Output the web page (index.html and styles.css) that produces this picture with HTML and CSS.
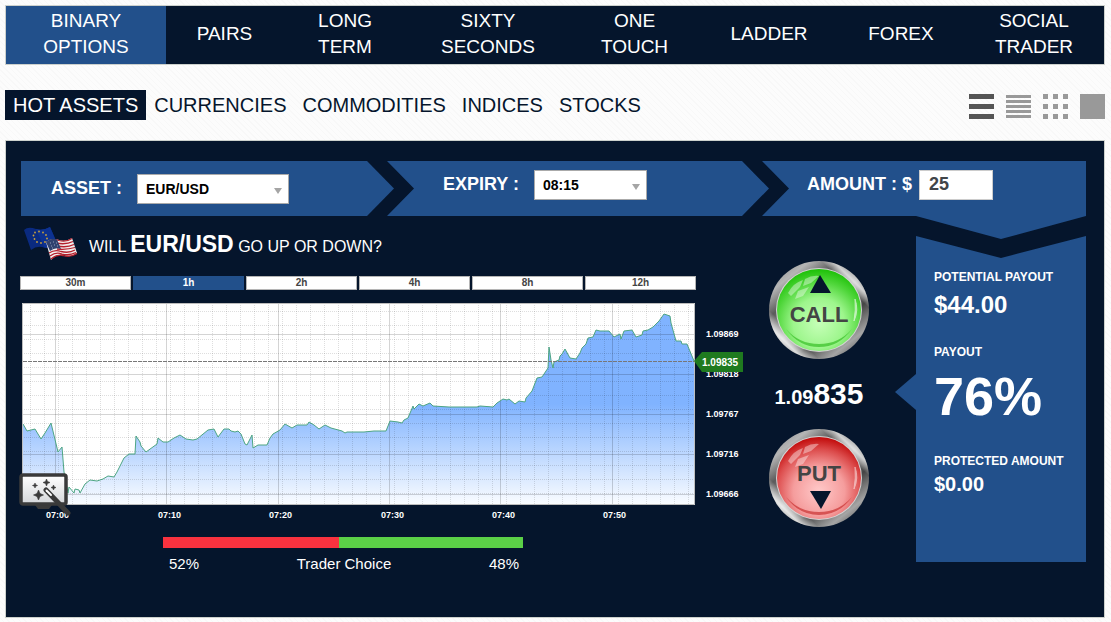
FILE: index.html
```html
<!DOCTYPE html>
<html lang="en">
<head>
<meta charset="utf-8">
<meta name="viewport" content="width=device-width, initial-scale=1">
<title>Binary Options</title>
<link rel="stylesheet" href="styles.css">
</head>
<body>
<nav class="main-nav" aria-label="Products">
  <a class="active" href="#binary">Binary<br>Options</a>
  <a href="#pairs">Pairs</a>
  <a href="#long">Long<br>Term</a>
  <a href="#sixty">Sixty<br>Seconds</a>
  <a href="#touch">One<br>Touch</a>
  <a href="#ladder">Ladder</a>
  <a href="#forex">Forex</a>
  <a href="#social">Social<br>Trader</a>
</nav>

<div class="toolbar">
  <nav class="asset-nav" aria-label="Assets">
    <a class="active" href="#hot">HOT ASSETS</a>
    <a href="#currencies">CURRENCIES</a>
    <a href="#commodities">COMMODITIES</a>
    <a href="#indices">INDICES</a>
    <a href="#stocks">STOCKS</a>
  </nav>
  <div class="views">
    <button class="current" type="button" aria-label="Wide rows"><svg width="25" height="25"><path d="M0 0h25v5H0zM0 10h25v5H0zM0 20h25v5H0z"/></svg></button>
    <button type="button" aria-label="Compact rows"><svg width="25" height="25"><path d="M0 1h25v3H0zM0 6h25v3H0zM0 11h25v3H0zM0 16h25v3H0zM0 21h25v3H0z"/></svg></button>
    <button type="button" aria-label="Grid"><svg width="25" height="25"><path d="M0 0h5v5H0zM10 0h5v5h-5zM20 0h5v5h-5zM0 10h5v5H0zM10 10h5v5h-5zM20 10h5v5h-5zM0 20h5v5H0zM10 20h5v5h-5zM20 20h5v5h-5z"/></svg></button>
    <button type="button" aria-label="Single"><svg width="25" height="25"><path d="M0 0h25v25H0z"/></svg></button>
  </div>
</div>

<main class="panel">
  <form class="steps">
    <div class="step step-asset">
      <label for="asset">ASSET :</label>
      <span class="select select-wide"><select id="asset"><option>EUR/USD</option></select></span>
    </div>
    <div class="step step-expiry">
      <label for="expiry">EXPIRY :</label>
      <span class="select"><select id="expiry"><option>08:15</option></select></span>
    </div>
    <div class="step step-amount">
      <label for="amount">AMOUNT : $</label>
      <input id="amount" type="text" value="25">
    </div>
  </form>

  <div class="trade">
    <section class="market">
      <h1 class="question">
        <svg class="flags" width="56" height="36" viewBox="0 0 56 36" aria-hidden="true">
          <path d="M1 4Q5 0 13 3Q20 5 27 1L34 17Q27 24 19 21Q13 20 8 24Z" fill="#0a2a80"/>
          <path d="M13 3Q20 5 27 1L34 17Q27 24 21 21Z" fill="#0d3291"/>
          <g fill="#c9a13c"><circle cx="16" cy="5.500" r=".9"/><circle cx="20" cy="6.500" r=".9"/><circle cx="23" cy="9" r=".9"/><circle cx="24" cy="12.500" r=".9"/><circle cx="22" cy="16" r=".9"/><circle cx="18" cy="17" r=".9"/><circle cx="14" cy="16" r=".9"/><circle cx="11.500" cy="13" r=".9"/><circle cx="10.500" cy="9.500" r=".9"/><circle cx="12" cy="6.500" r=".9"/></g>
          <path d="M23 16Q29 11 36 14Q43 16 49 12L54 27Q48 32 41 29Q33 28 28 34Z" fill="#f3eeee"/>
          <g fill="none" stroke="#b51f2c" stroke-width="1.300">
            <path d="M24 16.500Q30 12 36 14.500Q43 16.500 49 12.500M33 17Q43 19 50 15.500M34 20Q44 22 51 18.500M34 23Q44 24 52 21.500M26 27Q32 23 38 25.500Q46 27.500 52 24M27 30Q33 25.500 39 28Q46 30 53 26.500M28 33Q34 28 40 29.500Q47 32 54 27.500"/>
          </g>
          <path d="M23 16Q29 11 34 13.500L38 23Q32 21 27 25Z" fill="#31426f"/>
          <path d="M27 17h.8M30 16h.8M33 17h.8M28 20h.8M31 19h.8M34 20h.8M29 22h.8" stroke="#bcc5dc" stroke-width=".9"/>
        </svg>
        <span>WILL <strong>EUR/USD</strong> GO UP OR DOWN?</span>
      </h1>

      <div class="ranges">
        <button type="button">30m</button>
        <button class="active" type="button">1h</button>
        <button type="button">2h</button>
        <button type="button">4h</button>
        <button type="button">8h</button>
        <button type="button">12h</button>
      </div>

      <div class="chart">
        <svg class="plot" viewBox="0 0 724 222" role="img" aria-label="EUR/USD price, last hour">
          <defs>
            <linearGradient id="area" gradientUnits="userSpaceOnUse" x1="0" y1="0" x2="0" y2="202">
              <stop offset=".5" stop-color="#80b3ff"/>
              <stop offset="1" stop-color="#fbfdff"/>
            </linearGradient>
            <pattern id="minor" patternUnits="userSpaceOnUse" x="10" y="8" width="14" height="14">
              <path d="M.5 0V14M0 .5H14" stroke="#000" stroke-opacity=".13" stroke-dasharray="1 1"/>
            </pattern>
          </defs>
          <path d="M2 0H675V202H2Z" fill="#fff"/>
          <path fill="url(#area)" d="M3 202V121L7 128 15 126 21 136 25 130 31 120 38 149 42 144 44 169 48 190 49 184 54 190 55 186 59 187 60 190 65 181 70 177 77 178 83 176 88 173 94 174 97 169 104 155 109 151 115 151 116 133 120 139 121 143 126 149 137 141 138 135 143 139 148 139 154 135 160 132 166 136 173 137 177 136 188 127 194 126 198 134 204 126 209 126 211 128 215 129 218 128 221 131 225 141 227 142 232 132 233 145 238 142 247 142 250 135 253 131 260 127 265 121 272 125 277 122 287 122 289 119 294 122 299 126 305 122 311 125 322 128 325 130 327 129 344 129 354 128 366 128 370 118 378 119 382 120 384 117 388 115 393 103 394 106 399 101 403 103 410 100 413 103 429 104 457 104 460 103 473 104 477 100 483 96 487 97 489 96 495 101 499 98 505 99 506 95 512 88 517 75 522 74 528 65 529 44 531 57 533 65 534 59 539 57 540 53 542 51 545 46 550 55 556 56 560 50 562 45 566 41 568 35 573 34 576 27 580 28 589 28 594 34 600 31 601 36 604 28 612 27 616 34 622 32 623 28 628 27 633 24 639 18 644 11 650 13 651 20 656 38 661 38 662 41 667 41 674 58V202Z"/>
          <path fill="url(#minor)" d="M3 1H674V201H3Z"/>
          <path d="M35.500 1V201M146.500 1V201M258.500 1V201M369.500 1V201M480.500 1V201M592.500 1V201M3 31.500H674M3 71.500H674M3 111.500H674M3 151.500H674M3 191.500H674" stroke="#000" stroke-opacity=".17"/>
          <path fill="none" stroke="#4da583" d="M3 121L7 128 15 126 21 136 25 130 31 120 38 149 42 144 44 169 48 190 49 184 54 190 55 186 59 187 60 190 65 181 70 177 77 178 83 176 88 173 94 174 97 169 104 155 109 151 115 151 116 133 120 139 121 143 126 149 137 141 138 135 143 139 148 139 154 135 160 132 166 136 173 137 177 136 188 127 194 126 198 134 204 126 209 126 211 128 215 129 218 128 221 131 225 141 227 142 232 132 233 145 238 142 247 142 250 135 253 131 260 127 265 121 272 125 277 122 287 122 289 119 294 122 299 126 305 122 311 125 322 128 325 130 327 129 344 129 354 128 366 128 370 118 378 119 382 120 384 117 388 115 393 103 394 106 399 101 403 103 410 100 413 103 429 104 457 104 460 103 473 104 477 100 483 96 487 97 489 96 495 101 499 98 505 99 506 95 512 88 517 75 522 74 528 65 529 44 531 57 533 65 534 59 539 57 540 53 542 51 545 46 550 55 556 56 560 50 562 45 566 41 568 35 573 34 576 27 580 28 589 28 594 34 600 31 601 36 604 28 612 27 616 34 622 32 623 28 628 27 633 24 639 18 644 11 650 13 651 20 656 38 661 38 662 41 667 41 674 58"/>
          <path d="M2.500 .5H674.500V201.500H2.500Z" fill="none" stroke="#bdbdbd"/>
          <path d="M3 58.500H674" stroke="#777" stroke-dasharray="4 1"/>
          <g class="axis">
            <text x="686" y="34">1.09869</text>
            <text x="686" y="74">1.09818</text>
            <text x="686" y="114">1.09767</text>
            <text x="686" y="154">1.09716</text>
            <text x="686" y="194">1.09666</text>
            <text x="26" y="215">07:00</text>
            <text x="138" y="215">07:10</text>
            <text x="249" y="215">07:20</text>
            <text x="361" y="215">07:30</text>
            <text x="472" y="215">07:40</text>
            <text x="583" y="215">07:50</text>
          </g>
          <path d="M674 58L682 49H723V69H682Z" fill="#1f7a1f"/>
          <text class="tag" x="682" y="63">1.09835</text>
        </svg>
        <button class="tools" type="button" aria-label="Chart tools">
          <svg width="52" height="44" viewBox="0 0 52 44">
            <defs><linearGradient id="screen" x1="0" y1="0" x2="0" y2="1"><stop offset="0" stop-color="#fff"/><stop offset="1" stop-color="#d5d7da"/></linearGradient></defs>
            <path d="M16 32H33L30 36H19Z" fill="#3a3a3a"/>
            <rect x="2" y="2" width="45" height="29" rx="2" fill="url(#screen)" stroke="#3a3a3a" stroke-width="3.500"/>
            <path d="M19.500 17L21 20.500 24.500 22 21 23.500 19.500 27 18 23.500 14.500 22 18 20.500ZM27.500 6L28.500 8.500 31 9.500 28.500 10.500 27.500 13 26.500 10.500 24 9.500 26.500 8.500ZM16 10L16.700 11.800 18.500 12.500 16.700 13.200 16 15 15.300 13.200 13.500 12.500 15.300 11.800ZM34.500 12L35.200 13.800 37 14.500 35.200 15.200 34.500 17 33.800 15.200 32 14.500 33.800 13.800Z" fill="#3a3a3a" stroke="#3a3a3a" stroke-width=".6"/>
            <path d="M27 17L49 40" stroke="#3a3a3a" stroke-width="5" stroke-linecap="round"/>
            <path d="M27.500 17.500L32 22" stroke="#fff" stroke-width="2" stroke-linecap="round"/>
          </svg>
        </button>
      </div>

      <div class="choice">
        <div class="choice-bar"><i class="put-share"></i><i class="call-share"></i></div>
        <div class="choice-text"><span>52%</span><span>Trader Choice</span><span>48%</span></div>
      </div>
    </section>

    <section class="actions">
      <button type="button" class="round">
        <svg width="100" height="98" viewBox="0 0 100 98">
          <defs>
            <linearGradient id="rim" x1=".1" y1="0" x2=".9" y2="1">
              <stop offset="0" stop-color="#8b8b8b"/><stop offset=".15" stop-color="#b5b5b5"/><stop offset=".3" stop-color="#5b5b5b"/><stop offset=".5" stop-color="#999"/><stop offset=".68" stop-color="#444"/><stop offset=".85" stop-color="#a5a5a5"/><stop offset="1" stop-color="#444"/>
            </linearGradient>
            <linearGradient id="rim-glint" x1="0" y1="1" x2="1" y2="0">
              <stop offset=".08" stop-color="#fff" stop-opacity="0"/><stop offset=".17" stop-color="#fff" stop-opacity=".8"/><stop offset=".25" stop-color="#fff" stop-opacity="0"/><stop offset=".76" stop-color="#fff" stop-opacity="0"/><stop offset=".82" stop-color="#fff" stop-opacity=".7"/><stop offset=".9" stop-color="#fff" stop-opacity="0"/>
            </linearGradient>
            <radialGradient id="green" cx=".5" cy=".66" r=".68">
              <stop offset="0" stop-color="#c6ffb8"/><stop offset=".45" stop-color="#9df58c"/><stop offset=".75" stop-color="#4fd63a"/><stop offset="1" stop-color="#16bd00"/>
            </radialGradient>
            <radialGradient id="red" cx=".5" cy=".66" r=".68">
              <stop offset="0" stop-color="#ffc9c9"/><stop offset=".45" stop-color="#f59d9d"/><stop offset=".75" stop-color="#dc4c4c"/><stop offset="1" stop-color="#bd0000"/>
            </radialGradient>
          </defs>
          <ellipse cx="50" cy="49" rx="50" ry="49" fill="url(#rim)"/>
          <ellipse cx="50" cy="49" rx="50" ry="49" fill="url(#rim-glint)"/>
          <ellipse cx="50" cy="49" rx="43" ry="42" fill="#d5d5d5"/>
          <ellipse cx="50" cy="49" rx="42" ry="41" fill="url(#green)"/>
          <path d="M17 68Q30 86 50 86T83 68Q70 83 50 83T17 68Z" fill="#27b515" opacity=".6"/>
          <path d="M19 32Q24 22 34 19L31 26 22 35ZM36 18Q43 14 50 15L42 22 34 25ZM29 30L40 26 34 35 26 38Z" fill="#fff" opacity=".4"/>
          <path d="M86 38Q90 49 85 60Q87 49 86 38Z" fill="#fff" stroke="#fff" opacity=".6"/>
          <path d="M51 14L62 32H41Z" fill="#05152c"/>
          <text x="50" y="61" class="round-text">CALL</text>
        </svg>
      </button>
      <p class="price">1.09<b>835</b></p>
      <button type="button" class="round">
        <svg width="100" height="98" viewBox="0 0 100 98">
          <ellipse cx="50" cy="49" rx="50" ry="49" fill="url(#rim)"/>
          <ellipse cx="50" cy="49" rx="50" ry="49" fill="url(#rim-glint)"/>
          <ellipse cx="50" cy="49" rx="43" ry="42" fill="#d5d5d5"/>
          <ellipse cx="50" cy="49" rx="42" ry="41" fill="url(#red)"/>
          <path d="M17 68Q30 86 50 86T83 68Q70 83 50 83T17 68Z" fill="#c22020" opacity=".6"/>
          <path d="M19 32Q24 22 34 19L31 26 22 35ZM36 18Q43 14 50 15L42 22 34 25ZM29 30L40 26 34 35 26 38Z" fill="#fff" opacity=".4"/>
          <path d="M86 38Q90 49 85 60Q87 49 86 38Z" fill="#fff" stroke="#fff" opacity=".5"/>
          <path d="M52 80L62 62H41Z" fill="#05152c"/>
          <text x="50" y="52" class="round-text">PUT</text>
        </svg>
      </button>
    </section>

    <aside class="payout">
      <dl>
        <dt>POTENTIAL PAYOUT</dt>
        <dd class="potential">$44.00</dd>
        <dt>PAYOUT</dt>
        <dd class="rate">76%</dd>
        <dt>PROTECTED AMOUNT</dt>
        <dd class="protected">$0.00</dd>
      </dl>
    </aside>
  </div>
</main>
</body>
</html>
```
FILE: styles.css
```css
:root {
  --navy: #05152c;
  --blue: #22508b;
  --line: #cdd1cd;
}

* { box-sizing: border-box; }

body {
  margin: 0;
  padding: 5px 6px 5px 5px;
  font-family: "Liberation Sans", Arial, sans-serif;
  color: #fff;
  background: #fcfcfc repeating-linear-gradient(45deg, #fcfcfc 0 3px, #f8f8f8 3px 4px);
}

a { color: inherit; text-decoration: none; }

button {
  margin: 0;
  padding: 0;
  border: 0;
  background: none;
  font-family: inherit;
  cursor: pointer;
}

button svg { display: block; }

.main-nav {
  display: grid;
  grid-template-columns: 160fr 117fr 124fr 162fr 131fr 138fr 126fr 140fr;
  border: 1px solid var(--line);
  background: var(--navy);
  font-size: 19px;
  line-height: 26px;
  text-transform: uppercase;
  text-align: center;
}

.main-nav a {
  display: grid;
  place-content: center;
  min-height: 58px;
  padding-bottom: 2px;
}

.main-nav .active { background: var(--blue); }

.toolbar {
  display: flex;
  justify-content: space-between;
  align-items: center;
  margin: 25px 0 20px;
}

.asset-nav {
  display: flex;
  font-size: 20px;
  line-height: 30px;
  color: var(--navy);
}

.asset-nav a { padding: 0 8px; }

.asset-nav .active {
  background: var(--navy);
  color: #fff;
}

.views {
  display: flex;
  gap: 12px;
  padding-top: 3px;
  fill: #999;
}

.views .current { fill: #555; }

.panel {
  padding: 20px 18px 43px 14px;
  border: 1px solid var(--line);
  background: var(--navy);
}

.steps {
  display: grid;
  grid-template-columns: minmax(0, 366fr) minmax(0, 375fr) minmax(0, 324fr);
  margin-left: 1px;
  font-size: 18px;
  font-weight: bold;
}

.step {
  display: flex;
  align-items: center;
  gap: 15px;
  height: 55px;
  background: var(--blue);
  white-space: nowrap;
}

.step-asset {
  margin-right: -7px;
  padding-left: 30px;
  clip-path: polygon(0 0, calc(100% - 27px) 0, 100% 50%, calc(100% - 27px) 100%, 0 100%);
}

.step-expiry {
  margin-right: -7px;
  padding: 0 0 8px 56px;
  clip-path: polygon(0 0, calc(100% - 27px) 0, 100% 50%, calc(100% - 27px) 100%, 0 100%, 27px 50%);
}

.step-amount {
  gap: 7px;
  padding: 0 0 8px 45px;
  clip-path: polygon(0 0, 100% 0, 100% 100%, 0 100%, 27px 50%);
}

.select { position: relative; width: 113px; }
.select-wide { width: 152px; }

.select::after {
  content: "";
  position: absolute;
  right: 7px;
  top: 14px;
  border: 4px solid transparent;
  border-top: 6px solid #a5a5a5;
  border-bottom: 0;
  pointer-events: none;
}

.select select {
  display: block;
  appearance: none;
  width: 100%;
  height: 30px;
  padding: 0 8px;
  border: 1px solid #aaa;
  border-radius: 0;
  background: #fff;
  color: #000;
  font: bold 14px "Liberation Sans", Arial, sans-serif;
}

.step input {
  width: 74px;
  height: 30px;
  padding: 0 9px;
  border: 1px solid #ccc;
  background: #fff;
  color: #414549;
  font: bold 18px "Liberation Sans", Arial, sans-serif;
}

.trade {
  display: grid;
  grid-template-columns: minmax(0, 1fr) 172px 170px;
}

.question {
  display: flex;
  align-items: center;
  gap: 10px;
  margin: 10px 0 14px;
  padding-left: 3px;
  height: 36px;
  font-size: 16px;
  font-weight: normal;
}

.question strong { font-size: 23px; }

.ranges {
  display: grid;
  grid-template-columns: repeat(6, 1fr);
  gap: 2px;
  margin: 0 48px 13px 0;
}

.ranges button {
  height: 14px;
  border: 1px solid #b5b5b5;
  background: #fff;
  color: #444;
  font-size: 10px;
  font-weight: bold;
  line-height: 12px;
}

.ranges .active {
  border-color: var(--blue);
  background: var(--blue);
  color: #fff;
}

.chart { position: relative; }

.plot {
  display: block;
  width: 100%;
  height: auto;
}

.axis {
  fill: #fff;
  font-size: 9px;
  font-weight: bold;
}

.tag {
  fill: #fff;
  font-size: 10px;
  font-weight: bold;
}

.tools {
  position: absolute;
  left: -1px;
  bottom: 8px;
}

.choice {
  width: 360px;
  margin: 12px 0 0 143px;
}

.choice-bar {
  display: flex;
  height: 11px;
}

.put-share { flex: 176; background: #f9323f; }
.call-share { flex: 184; background: #5bd047; }

.choice-text {
  display: flex;
  justify-content: space-between;
  padding: 6px 4px 0 6px;
  font-size: 15px;
  line-height: 20px;
}

.actions {
  display: flex;
  flex-direction: column;
  align-items: center;
  padding: 45px 22px 0 0;
}

.round-text {
  fill: #444;
  font-size: 22px;
  font-weight: bold;
  text-anchor: middle;
}

.price {
  margin: 17px 0 14px;
  font-size: 20px;
  font-weight: bold;
  line-height: 36px;
}

.price b { font-size: 30px; }

.payout { position: relative; }

.payout::before {
  content: "";
  display: block;
  height: 23px;
  background: var(--blue);
  clip-path: polygon(0 0, 100% 0, 50% 100%);
}

.payout::after {
  content: "";
  position: absolute;
  top: 158px;
  right: 100%;
  border: 18px solid transparent;
  border-right: 21px solid var(--blue);
  border-left: 0;
}

.payout dl {
  margin: -3px 0 0;
  padding: 33px 18px 68px;
  background: var(--blue);
  clip-path: polygon(0 0, 50% 22px, 100% 0, 100% 100%, 0 100%);
  font-weight: bold;
}

.payout dt {
  font-size: 12px;
  line-height: 16px;
  white-space: nowrap;
}

.payout dd { margin: 0; }

.potential {
  padding: 6px 0 25px;
  font-size: 24px;
  line-height: 28px;
}

.rate {
  padding: 9px 0 30px;
  font-size: 54px;
  line-height: 54px;
}

.protected {
  padding-top: 5px;
  font-size: 20px;
  line-height: 20px;
}
```
